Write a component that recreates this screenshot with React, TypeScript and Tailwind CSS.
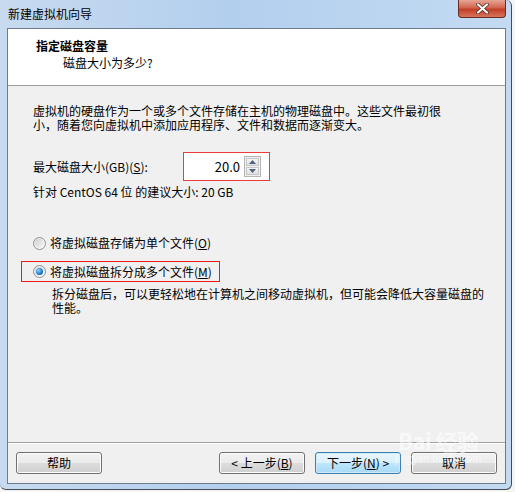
import React from "react";

const font = "font-['Noto_Sans_CJK_SC','Noto_Sans',sans-serif]";

function Radio({ checked }: { checked?: boolean }) {
  return (
    <span className="flex h-[13px] w-[13px] shrink-0 items-center justify-center rounded-full border border-[#8e8f8f] bg-gradient-to-br from-[#e6e6e6] to-[#ffffff]">
      <span className="flex h-[9px] w-[9px] items-center justify-center rounded-full bg-gradient-to-br from-[#cfcfcf] to-[#f7f7f7]">
        {checked ? (
          <span className="h-[7px] w-[7px] rounded-full bg-[radial-gradient(circle_at_35%_35%,#8fd3ff,#1b78c8_60%,#0b4f93)]" />
        ) : null}
      </span>
    </span>
  );
}

function WinButton({
  children,
  primary,
}: {
  children: React.ReactNode;
  primary?: boolean;
}) {
  return (
    <button
      type="button"
      className={`flex h-[22px] w-[86px] items-center justify-center rounded-[3px] border text-[12px] text-black ${
        primary
          ? "border-[#3c7fb1] bg-[linear-gradient(#eaf6fd_0%,#d9f0fc_50%,#bee6fd_50%,#a7d9f5_100%)] shadow-[inset_0_0_0_1px_#cfeaf9]"
          : "border-[#707070] bg-[linear-gradient(#f2f2f2_0%,#ebebeb_50%,#dddddd_50%,#cfcfcf_100%)] shadow-[inset_0_0_0_1px_#fcfcfc]"
      }`}
    >
      {children}
    </button>
  );
}

export default function App() {
  return (
    <div className={`relative h-[492px] w-[515px] overflow-hidden bg-[#f4f4f4] ${font}`}>
      <div className="flex h-[490px] w-[512px] flex-col rounded-b-[6px] rounded-tr-[6px] border-r border-b border-[#434c56] bg-[linear-gradient(90deg,#c7daef,#b3cfee_45%,#c3daf2)] pl-[7px] pr-[5px] pb-[5px]">
        {/* title bar */}
        <div className="flex h-[28px] shrink-0 items-start justify-between">
          <span className="mt-[5px] pl-[1px] text-[12px] text-black">新建虚拟机向导</span>
          <div className="flex h-[18px] w-[48px] items-center justify-center rounded-b-[4px] border border-t-0 border-[#6d2a20] bg-[linear-gradient(#e7a595_0%,#d2654f_45%,#c23f26_55%,#d7745d_100%)]">
            <svg width="13" height="11" viewBox="0 0 13 11">
              <path
                d="M2 1.5 L11 9.5 M11 1.5 L2 9.5"
                stroke="#4a2520"
                strokeWidth="3.6"
                strokeLinecap="round"
              />
              <path
                d="M2 1.5 L11 9.5 M11 1.5 L2 9.5"
                stroke="#ffffff"
                strokeWidth="2.2"
                strokeLinecap="round"
              />
            </svg>
          </div>
        </div>

        {/* client area */}
        <div className="flex flex-1 flex-col border border-[#6c7b8e] bg-[#f0f0f0] text-[12px] leading-[14px] text-black">
          <div className="flex h-[57px] shrink-0 flex-col border-b border-[#a0a0a0] bg-white pl-[28px] pt-[9px] leading-[15px]">
            <span className="font-bold">指定磁盘容量</span>
            <span className="mt-[2px] pl-[27px]">磁盘大小为多少?</span>
          </div>

          <div className="flex flex-1 flex-col pl-[25px] pt-[18px]">
            <p>
              虚拟机的硬盘作为一个或多个文件存储在主机的物理磁盘中。这些文件最初很
              <br />
              小，随着您向虚拟机中添加应用程序、文件和数据而逐渐变大。
            </p>

            <div className="mt-[20px] flex items-center">
              <span className="w-[150px]">
                最大磁盘大小(GB)(<span className="underline">S</span>):
              </span>
              <div className="flex h-[29px] w-[87px] items-center border border-[#ee3b3b] bg-white pl-[2px] pr-[8px]">
                <span className="flex-1 pr-[4px] text-right text-[13px]">20.0</span>
                <div className="flex h-[21px] w-[17px] flex-col gap-[1px] border border-[#b5b5b5] bg-[#f0f0f0] p-[1px]">
                  <span className="flex flex-1 items-center justify-center border border-[#c7c7c7] bg-[linear-gradient(#f6f6f6,#dedede)]">
                    <svg width="7" height="4" viewBox="0 0 7 4">
                      <path d="M0 4 L3.5 0 L7 4 Z" fill="#4d6185" />
                    </svg>
                  </span>
                  <span className="flex flex-1 items-center justify-center border border-[#c7c7c7] bg-[linear-gradient(#f6f6f6,#dedede)]">
                    <svg width="7" height="4" viewBox="0 0 7 4">
                      <path d="M0 0 L7 0 L3.5 4 Z" fill="#4d6185" />
                    </svg>
                  </span>
                </div>
              </div>
            </div>

            <p className="mt-[4px]">针对 CentOS 64 位 的建议大小: 20 GB</p>

            <div className="mt-[37px] flex h-[14px] items-center gap-[4px]">
              <Radio />
              <span>
                将虚拟磁盘存储为单个文件(<span className="underline">O</span>)
              </span>
            </div>

            <div className="-ml-[12px] mt-[11px] flex h-[21px] w-[199px] items-center gap-[4px] border border-[#f01818] pl-[11px]">
              <Radio checked />
              <span>
                将虚拟磁盘拆分成多个文件(<span className="underline">M</span>)
              </span>
            </div>

            <p className="mt-[5px] pl-[19px]">
              拆分磁盘后，可以更轻松地在计算机之间移动虚拟机，但可能会降低大容量磁盘的
              <br />
              性能。
            </p>
          </div>

          <div className="flex h-[41px] shrink-0 items-start justify-between border-t border-[#a0a0a0] px-[8px] pt-[9px] shadow-[inset_0_1px_0_#ffffff]">
            <WinButton>帮助</WinButton>
            <div className="flex gap-[10px]">
              <WinButton>
                &lt; 上一步(<span className="underline">B</span>)
              </WinButton>
              <WinButton primary>
                下一步(<span className="underline">N</span>) &gt;
              </WinButton>
              <WinButton>取消</WinButton>
            </div>
          </div>
        </div>
      </div>

      {/* watermark */}
      <div className="pointer-events-none absolute left-[395px] top-[428px] flex flex-col items-center text-white/60">
        <span className="text-[22px] font-bold leading-[24px] tracking-tight">Bai 经验</span>
        <span className="text-[10px] leading-[12px]">jingyan.baidu.com</span>
      </div>
    </div>
  );
}
